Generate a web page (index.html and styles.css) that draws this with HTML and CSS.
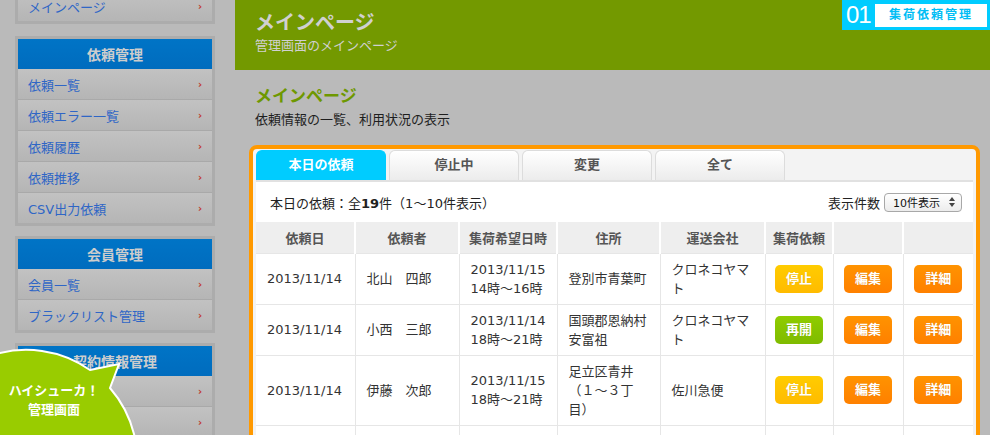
FILE: index.html
```html
<!DOCTYPE html>
<html lang="ja">
<head>
  <meta charset="UTF-8">
  <title>ハイシューカ！管理画面</title>
  <link rel="stylesheet" href="styles.css">
</head>
<body>
  <div class="layout">
    <aside class="sidebar">
      <nav class="side-box">
        <a class="side-link" href="#">メインページ</a>
      </nav>
      <nav class="side-box">
        <h2 class="side-head">依頼管理</h2>
        <a class="side-link" href="#">依頼一覧</a>
        <a class="side-link" href="#">依頼エラー一覧</a>
        <a class="side-link" href="#">依頼履歴</a>
        <a class="side-link" href="#">依頼推移</a>
        <a class="side-link" href="#">CSV出力依頼</a>
      </nav>
      <nav class="side-box">
        <h2 class="side-head">会員管理</h2>
        <a class="side-link" href="#">会員一覧</a>
        <a class="side-link" href="#">ブラックリスト管理</a>
      </nav>
      <nav class="side-box">
        <h2 class="side-head">契約情報管理</h2>
        <a class="side-link" href="#">契約一覧</a>
        <a class="side-link" href="#">契約履歴</a>
      </nav>
    </aside>

    <main class="main">
      <header class="page-header">
        <h1 class="page-title">メインページ</h1>
        <p class="page-sub">管理画面のメインページ</p>
        <div class="step-badge">
          <span class="step-num">01</span>
          <span class="step-label">集荷依頼管理</span>
        </div>
      </header>

      <section class="content">
        <h2 class="section-title">メインページ</h2>
        <p class="section-desc">依頼情報の一覧、利用状況の表示</p>

        <div class="panel">
          <ul class="tabs">
            <li class="tab is-active">本日の依頼</li>
            <li class="tab">停止中</li>
            <li class="tab">変更</li>
            <li class="tab">全て</li>
          </ul>
          <div class="panel-body">
            <div class="list-info">
              <span>本日の依頼：全<b>19</b>件（1〜10件表示）</span>
              <span class="per-page">表示件数
                <span class="select">10件表示
                  <svg width="6" height="10" viewBox="0 0 6 10"><path d="M0 4 L3 0 L6 4 Z M0 6 L3 10 L6 6 Z" fill="#444"/></svg>
                </span>
              </span>
            </div>
            <table class="req-table">
              <colgroup>
                <col class="c-date"><col class="c-name"><col class="c-time"><col class="c-addr">
                <col class="c-carrier"><col class="c-act"><col class="c-btn"><col class="c-btn">
              </colgroup>
              <thead>
                <tr>
                  <th>依頼日</th><th>依頼者</th><th>集荷希望日時</th><th>住所</th>
                  <th>運送会社</th><th>集荷依頼</th><th></th><th></th>
                </tr>
              </thead>
              <tbody>
                <tr>
                  <td>2013/11/14</td>
                  <td>北山　四郎</td>
                  <td>2013/11/15<br>14時〜16時</td>
                  <td>登別市青葉町</td>
                  <td>クロネコヤマト</td>
                  <td class="btn-cell"><span class="btn btn-stop">停止</span></td>
                  <td class="btn-cell"><span class="btn btn-edit">編集</span></td>
                  <td class="btn-cell"><span class="btn btn-edit">詳細</span></td>
                </tr>
                <tr>
                  <td>2013/11/14</td>
                  <td>小西　三郎</td>
                  <td>2013/11/14<br>18時〜21時</td>
                  <td>国頭郡恩納村安富祖</td>
                  <td>クロネコヤマト</td>
                  <td class="btn-cell"><span class="btn btn-resume">再開</span></td>
                  <td class="btn-cell"><span class="btn btn-edit">編集</span></td>
                  <td class="btn-cell"><span class="btn btn-edit">詳細</span></td>
                </tr>
                <tr>
                  <td>2013/11/14</td>
                  <td>伊藤　次郎</td>
                  <td>2013/11/15<br>18時〜21時</td>
                  <td>足立区青井（１〜３丁目）</td>
                  <td>佐川急便</td>
                  <td class="btn-cell"><span class="btn btn-stop">停止</span></td>
                  <td class="btn-cell"><span class="btn btn-edit">編集</span></td>
                  <td class="btn-cell"><span class="btn btn-edit">詳細</span></td>
                </tr>
                <tr>
                  <td>2013/11/14</td>
                  <td>鈴木　一郎</td>
                  <td>2013/11/15<br>10時〜12時</td>
                  <td>札幌市中央区北一条西（２丁目）</td>
                  <td>佐川急便</td>
                  <td class="btn-cell"><span class="btn btn-stop">停止</span></td>
                  <td class="btn-cell"><span class="btn btn-edit">編集</span></td>
                  <td class="btn-cell"><span class="btn btn-edit">詳細</span></td>
                </tr>
              </tbody>
            </table>
          </div>
        </div>
      </section>
    </main>
  </div>

  <!-- guide bubble -->
  <div class="bubble">
    <svg class="bubble-shape" width="140" height="100" viewBox="0 0 140 100">
      <path d="M90 35 L119 29 L110 53 A111 111 0 1 1 90 35 Z" fill="#99cc00" stroke="#fff" stroke-width="2"/>
    </svg>
    <p class="bubble-text">ハイシューカ！<br>管理画面</p>
  </div>
</body>
</html>
```

FILE: styles.css
```css
* {
  box-sizing: border-box;
}
html, body {
  margin: 0;
  height: 100%;
}
body {
  background: #bababa;
  font-family: "DejaVu Sans", "Noto Sans CJK JP", sans-serif;
  font-size: 13px;
  color: #222;
  overflow: hidden;
}
.layout {
  display: flex;
}

/* sidebar */
.sidebar {
  width: 235px;
  flex: none;
  padding: 0 20px 0 15px;
  margin-top: -12px;
}
.side-box {
  border: 3px solid #acacac;
  margin-bottom: 10px;
  background: #bdbdbd;
}
.side-box:first-child {
  margin-bottom: 12px;
}
.side-head {
  margin: 0;
  height: 30px;
  line-height: 30px;
  background: linear-gradient(#0074c6, #006cbe);
  color: #cdcdcd;
  font-size: 14px;
  font-weight: bold;
  text-align: center;
  font-family: "Noto Sans CJK JP", sans-serif;
}
.side-link {
  display: flex;
  justify-content: space-between;
  align-items: center;
  height: 31px;
  padding: 0 10px;
  border-top: 1px solid #a9a9a9;
  background: linear-gradient(#c2c2c2, #b5b5b5);
  color: #2f66c6;
  text-decoration: none;
  font-size: 13px;
}
.side-box > .side-link:first-child,
.side-head + .side-link {
  border-top: none;
  height: 30px;
}
.side-link::after {
  content: "›";
  color: #c0392b;
  font-size: 10px;
  font-weight: bold;
}

/* header */
.main {
  flex: 1;
}
.page-header {
  position: relative;
  height: 70px;
  padding: 9px 20px 0;
  background: #739900;
  color: #d0d0d0;
}
.page-title {
  margin: 0;
  font-size: 20px;
  line-height: 28px;
  font-weight: bold;
}
.page-sub {
  margin: 0;
  line-height: 18px;
}
.step-badge {
  position: absolute;
  top: 0;
  right: 0;
  width: 148px;
  height: 30px;
  display: flex;
  align-items: center;
  padding: 0 3px 0 4px;
  background: #00ccff;
}
.step-num {
  font-family: "Liberation Sans", sans-serif;
  font-size: 24px;
  letter-spacing: -1px;
  color: #fff;
}
.step-label {
  margin-left: auto;
  width: 112px;
  height: 23px;
  line-height: 23px;
  background: #fff;
  color: #00bdf5;
  font-size: 12px;
  font-weight: bold;
  letter-spacing: 2px;
  text-align: center;
}

/* content */
.content {
  padding: 0 10px 0 14px;
}
.section-title {
  margin: 14px 0 0 6px;
  font-size: 17px;
  line-height: 24px;
  color: #6e9800;
}
.section-desc {
  margin: 2px 0 0 6px;
  line-height: 20px;
  color: #1e1e1e;
}
.panel {
  margin-top: 15px;
  border: 4px solid #ff9900;
  border-radius: 8px;
  background: #f3f3f3;
  padding: 1px 3px 0;
}
.tabs {
  display: flex;
  gap: 3px;
  list-style: none;
  margin: 0;
  padding: 0;
}
.tab {
  width: 130px;
  height: 30px;
  line-height: 28px;
  text-align: center;
  font-weight: bold;
  color: #555;
  background: linear-gradient(#fff, #ececec);
  border: 1px solid #dcdcdc;
  border-bottom: 0;
  border-radius: 6px 6px 0 0;
}
.tab.is-active {
  background: #00ccff;
  border-color: #00ccff;
  color: #fff;
}
.panel-body {
  background: #fff;
  border-top: 2px solid #e1e1e1;
}
.list-info {
  display: flex;
  justify-content: space-between;
  align-items: center;
  height: 40px;
  padding: 0 11px 0 14px;
}
.per-page {
  display: flex;
  align-items: center;
  gap: 4px;
}
.select {
  display: flex;
  align-items: center;
  justify-content: space-between;
  width: 78px;
  height: 19px;
  padding: 0 6px 0 8px;
  border: 1px solid #a8a8a8;
  border-radius: 4px;
  background: linear-gradient(#fff, #ececec);
  font-size: 11px;
  color: #111;
}

/* table */
.req-table {
  width: 100%;
  border-collapse: collapse;
  table-layout: fixed;
}
.c-date { width: 99px; }
.c-name { width: 104px; }
.c-time { width: 98px; }
.c-addr { width: 103px; }
.c-carrier { width: 105px; }
.c-act { width: 68px; }
.c-btn { width: 70px; }
.req-table th {
  height: 31px;
  padding: 0;
  background: #eee;
  color: #555;
  font-weight: bold;
  border-left: 2px solid #fff;
}
.req-table th:first-child {
  border-left: 0;
}
.req-table td {
  padding: 6px 10px 6px 11px;
  line-height: 19px;
  color: #333;
  vertical-align: middle;
  border-top: 1px solid #e6e6e6;
  border-left: 1px solid #e6e6e6;
}
.req-table td:first-child {
  border-left: 0;
}
.req-table td.btn-cell {
  padding: 0;
  text-align: center;
}
.btn {
  display: inline-block;
  width: 48px;
  height: 28px;
  line-height: 28px;
  border-radius: 5px;
  color: #fff;
  font-weight: bold;
  text-shadow: 0 0 1px rgba(0,0,0,0.15);
}
.btn-stop {
  background: linear-gradient(#ffcc00, #ffbb00);
}
.btn-edit {
  background: linear-gradient(#ff9300, #ff8000);
}
.btn-resume {
  background: linear-gradient(#8fcc00, #7fbb00);
}

/* guide bubble */
.bubble {
  position: absolute;
  left: 0;
  top: 335px;
  width: 140px;
  height: 100px;
}
.bubble-shape {
  position: absolute;
  left: 0;
  top: 0;
}
.bubble-text {
  position: absolute;
  left: 0;
  top: 45px;
  width: 108px;
  margin: 0;
  text-align: center;
  color: #fff;
  font-family: "Noto Sans CJK JP", sans-serif;
  font-weight: bold;
  font-size: 13px;
  line-height: 19px;
}
```
